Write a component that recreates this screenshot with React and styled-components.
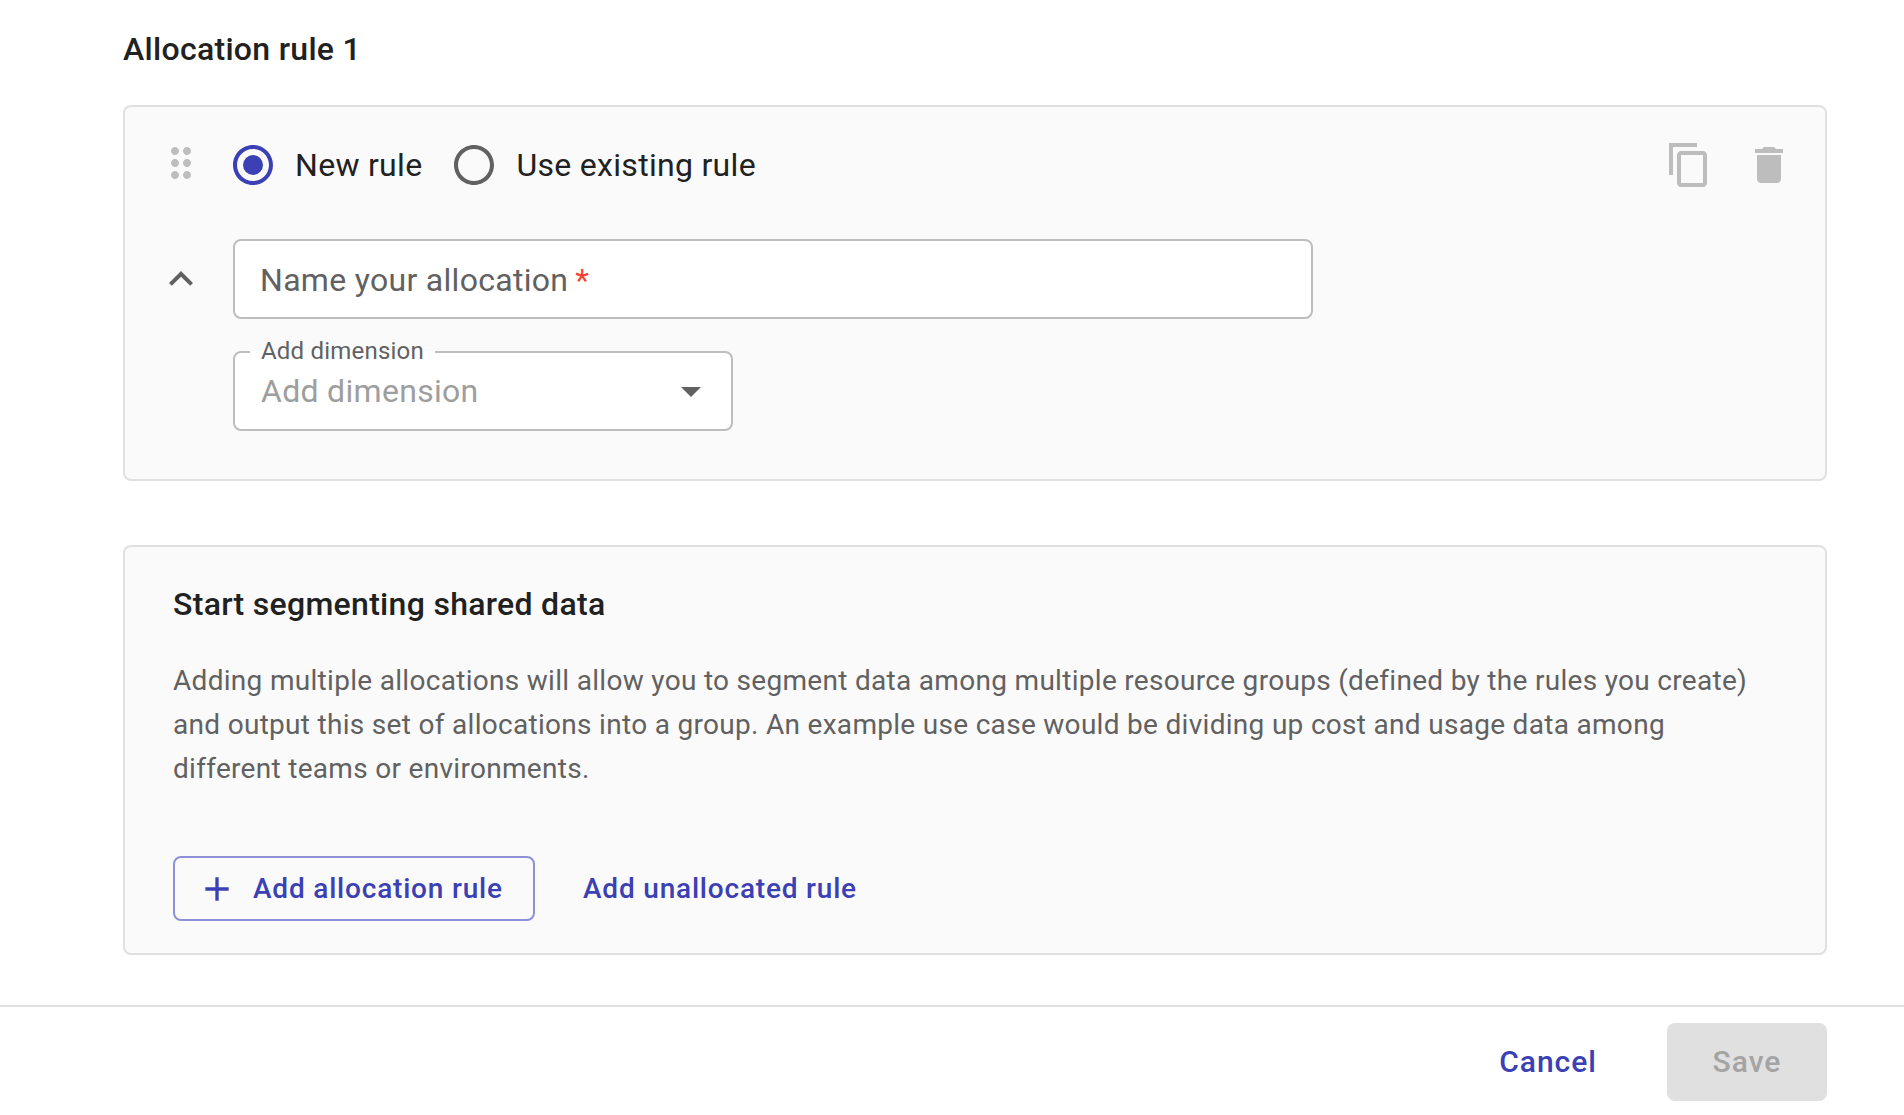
import React from "react";
import styled, { createGlobalStyle } from "styled-components";

const Global = createGlobalStyle`
  html, body { margin: 0; padding: 0; background: #fff; }
  body { font-family: Roboto, "Liberation Sans", sans-serif; color: #212121; -webkit-font-smoothing: antialiased; }
  * { box-sizing: border-box; }
`;

const Page = styled.div`
  width: 1904px; height: 1115px; overflow: hidden;
  display: flex; flex-direction: column; background: #fff;
`;
const Content = styled.main`
  padding: 31px 77px 0 123px; flex: 1;
  display: flex; flex-direction: column;
`;
const PageTitle = styled.h2`
  margin: 0 0 38px; font-size: 32px; line-height: 36px; font-weight: 500; letter-spacing: 0.3px; color: #212121;
`;
const Card = styled.section`
  border: 2px solid #e0e0e0; border-radius: 8px; background: #fafafa;
  padding: ${p => p.$pad};
  margin-bottom: ${p => p.$mb || 0}px;
`;
const HeadRow = styled.div`
  display: flex; align-items: center; height: 48px; margin-bottom: 50px;
`;
const Icon = styled.svg`
  width: ${p => p.$size || 48}px; height: ${p => p.$size || 48}px; flex: none; display: block; fill: ${p => p.$c};
`;
const DragHandle = styled.div`
  display: flex; margin-top: -4px;
`;
const RadioLabel = styled.label`
  display: flex; align-items: center; gap: 18px; margin-right: 28px;
  font-size: 32px; letter-spacing: 0.3px; color: #212121;
`;
const RadioGroup = styled.div`
  display: flex; align-items: center; margin-left: 24px; flex: 1;
`;
const Actions = styled.div`
  display: flex; gap: 32px;
`;
const BodyRow = styled.div`
  display: flex; align-items: flex-start; gap: 28px;
`;
const Fields = styled.div`
  display: flex; flex-direction: column; gap: 32px;
`;
const Collapse = styled.div`
  height: 80px; display: flex; align-items: center;
`;
const TextField = styled.div`
  width: 1080px; height: 80px; background: #fff;
  border: 2px solid #bdbdbd; border-radius: 8px;
  display: flex; align-items: center; padding: 2px 0 0 25px;
  font-size: 32px; letter-spacing: 0.3px; color: #616161;
`;
const Required = styled.span`
  color: #f44336; margin-left: 7px;
`;
const SelectField = styled.div`
  position: relative; width: 500px; height: 80px; background: #fff;
  border: 2px solid #bdbdbd; border-radius: 8px;
  display: flex; align-items: center; justify-content: space-between;
  padding: 0 16px 0 26px;
  font-size: 32px; letter-spacing: 0.3px; color: #9e9e9e;
`;
const FloatLabel = styled.span`
  position: absolute; left: 15px; top: -16px; padding: 0 11px;
  font-size: 24px; line-height: 28px; letter-spacing: 0.2px; color: #616161;
  background: linear-gradient(to bottom, #fafafa 50%, #fff 50%);
`;
const SectionTitle = styled.h3`
  margin: 0 0 37px; font-size: 32px; line-height: 36px; font-weight: 500; letter-spacing: 0.3px; color: #212121;
`;
const Paragraph = styled.p`
  margin: 0 0 65px; font-size: 28px; line-height: 44px; letter-spacing: 0.3px; color: #616161; max-width: 1600px;
`;
const ButtonRow = styled.div`
  display: flex; align-items: center; gap: 48px;
`;
const OutlineButton = styled.button`
  height: 65px; width: 362px; padding: 0 0 0 22px; background: transparent;
  border: 2px solid #8e90d8; border-radius: 8px;
  display: flex; align-items: center; gap: 16px;
  font: 500 28px Roboto, sans-serif; letter-spacing: 0.8px; color: #3b40b4;
`;
const TextButton = styled.button`
  padding: 0; border: 0; background: transparent;
  font: 500 28px Roboto, sans-serif; letter-spacing: 0.8px; color: #3b40b4;
`;
const Footer = styled.footer`
  border-top: 2px solid #e0e0e0; height: 110px;
  display: flex; align-items: flex-start; justify-content: flex-end; gap: 70px;
  padding: 16px 77px 0 0;
`;
const CancelButton = styled(TextButton)`
  height: 78px; padding-bottom: 2px; font-size: 30px; letter-spacing: 1px;
`;
const SaveButton = styled.button`
  width: 160px; height: 78px; padding: 0 0 2px; border: 0; border-radius: 8px; background: #e0e0e0;
  font: 500 30px Roboto, sans-serif; letter-spacing: 1px; color: #a4a4a4;
`;

const P = {
  drag: "M11 18c0 1.1-.9 2-2 2s-2-.9-2-2 .9-2 2-2 2 .9 2 2zm-2-8c-1.1 0-2 .9-2 2s.9 2 2 2 2-.9 2-2-.9-2-2-2zm0-6c-1.1 0-2 .9-2 2s.9 2 2 2 2-.9 2-2-.9-2-2-2zm6 4c1.1 0 2-.9 2-2s-.9-2-2-2-2 .9-2 2 .9 2 2 2zm0 2c-1.1 0-2 .9-2 2s.9 2 2 2 2-.9 2-2-.9-2-2-2zm0 6c-1.1 0-2 .9-2 2s.9 2 2 2 2-.9 2-2-.9-2-2-2z",
  ring: "M12 2C6.48 2 2 6.48 2 12s4.48 10 10 10 10-4.48 10-10S17.52 2 12 2zm0 18c-4.42 0-8-3.58-8-8s3.58-8 8-8 8 3.58 8 8-3.58 8-8 8z",
  copy: "M16 1H2v16h2V3h12V1zm3 4H8c-1.1 0-2 .9-2 2v14c0 1.1.9 2 2 2h11c1.1 0 2-.9 2-2V7c0-1.1-.9-2-2-2zm0 16H8V7h11v14z",
  trash: "M6 19c0 1.1.9 2 2 2h8c1.1 0 2-.9 2-2V7H6v12zM19 4h-3.5l-1-1h-5l-1 1H5v2h14V4z",
  less: "M12 8l-6 6 1.41 1.41L12 10.83l4.59 4.58L18 14z",
  drop: "M7 10l5 5 5-5z",
  plus: "M19 13h-6v6h-2v-6H5v-2h6V5h2v6h6v2z",
};

const Glyph = ({ d, c, size, children }) => (
  <Icon viewBox="0 0 24 24" $c={c} $size={size}><path d={d} />{children}</Icon>
);

export default function App() {
  return (
    <Page>
      <Global />
      <Content>
        <PageTitle>Allocation rule 1</PageTitle>
        <Card $pad="34px 32px 48px" $mb={64}>
          <HeadRow>
            <DragHandle><Glyph d={P.drag} c="#bdbdbd" /></DragHandle>
            <RadioGroup>
              <RadioLabel>
                <Glyph d={P.ring} c="#3b40b4"><circle cx="12" cy="12" r="5" /></Glyph>
                New rule
              </RadioLabel>
              <RadioLabel>
                <Glyph d={P.ring} c="#616161" />
                Use existing rule
              </RadioLabel>
            </RadioGroup>
            <Actions>
              <Glyph d={P.copy} c="#bdbdbd" />
              <Glyph d={P.trash} c="#bdbdbd" />
            </Actions>
          </HeadRow>
          <BodyRow>
            <Collapse><Glyph d={P.less} c="#616161" /></Collapse>
            <Fields>
              <TextField>Name your allocation<Required>*</Required></TextField>
              <SelectField>
                <FloatLabel>Add dimension</FloatLabel>
                Add dimension
                <Glyph d={P.drop} c="#616161" />
              </SelectField>
            </Fields>
          </BodyRow>
        </Card>
        <Card $pad="39px 48px 32px">
          <SectionTitle>Start segmenting shared data</SectionTitle>
          <Paragraph>
            Adding multiple allocations will allow you to segment data among multiple resource groups (defined by the rules you create) and output this set of allocations into a group. An example use case would be dividing up cost and usage data among different teams or environments.
          </Paragraph>
          <ButtonRow>
            <OutlineButton><Glyph d={P.plus} c="#3b40b4" size={40} />Add allocation rule</OutlineButton>
            <TextButton>Add unallocated rule</TextButton>
          </ButtonRow>
        </Card>
      </Content>
      <Footer>
        <CancelButton>Cancel</CancelButton>
        <SaveButton disabled>Save</SaveButton>
      </Footer>
    </Page>
  );
}
